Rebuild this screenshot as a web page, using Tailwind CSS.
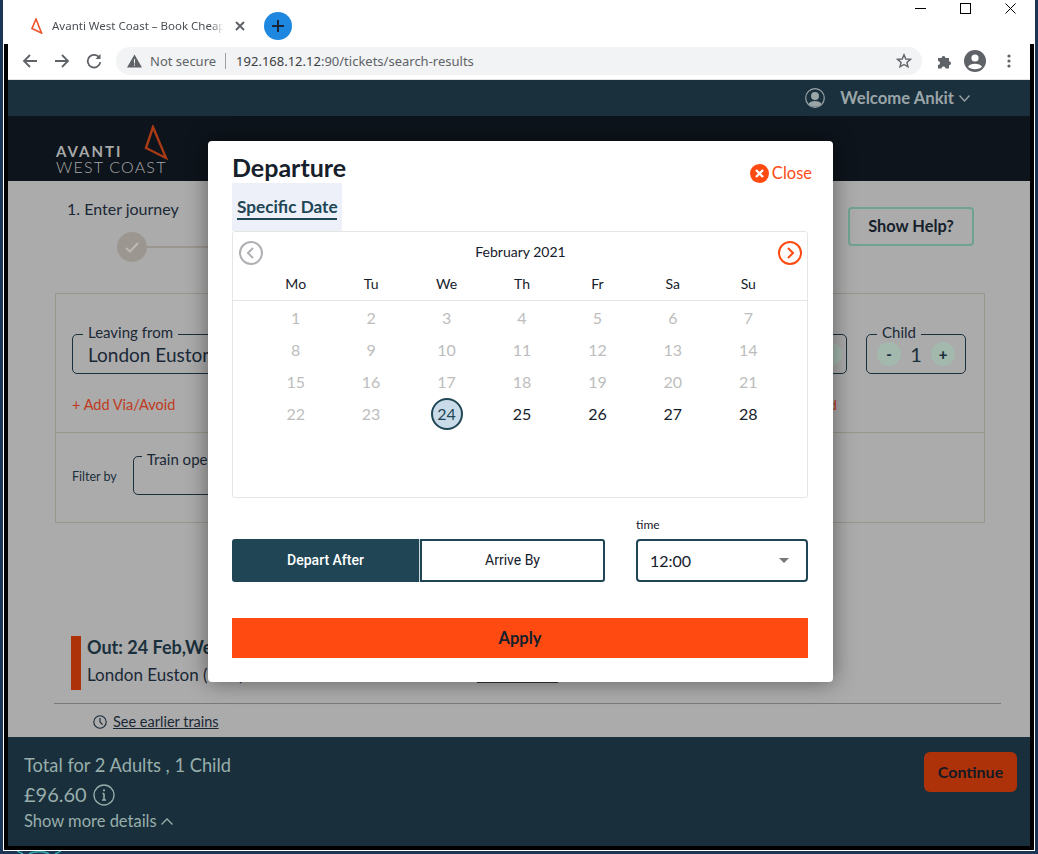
<!DOCTYPE html>
<html lang="en">
<head>
  <meta charset="UTF-8">
  <title>Avanti West Coast – Book Cheap Train Tickets</title>
  <meta name="viewport" content="width=device-width, initial-scale=1.0">
  <script src="https://cdn.jsdelivr.net/npm/@tailwindcss/browser@4"></script>
</head>
<body class="bg-[#1c3557] font-['Lato',sans-serif] overflow-hidden">
  <!-- screen behind the browser window -->
  <div class="w-[1038px] h-[854px] pl-[3px] pr-[3px] overflow-hidden">
    <div class="w-[1032px] h-[851px] bg-white border-r border-l border-b border-white flex flex-col">

      <!-- tab strip -->
      <div class="h-[44px] flex items-center shrink-0 font-['Noto_Sans',sans-serif] mt-[4px] mb-[-4px]">
        <svg class="ml-[27px] w-[12px] h-[16px]" viewBox="0 0 12 16" fill="none" stroke="#f0532a" stroke-width="1.6"><path d="M5 1 L1 10.5 L10.5 15 Z"/></svg>
        <div class="ml-[9px] w-[172px] text-[11.5px] leading-[14px] text-[#4a4f55] whitespace-nowrap overflow-hidden [mask-image:linear-gradient(to_right,black_92%,transparent)]">Avanti West Coast – Book Cheap</div>
        <svg class="ml-[11px] w-[10px] h-[10px]" viewBox="0 0 10 10" stroke="#5f6368" stroke-width="2"><path d="M1 1 L9 9 M9 1 L1 9"/></svg>
        <div class="ml-[19px] w-[28px] h-[28px] rounded-full bg-[#1e88e0] flex items-center justify-center">
          <svg class="w-[14px] h-[14px]" viewBox="0 0 14 14" stroke="#17263a" stroke-width="2"><path d="M7 1 V13 M1 7 H13"/></svg>
        </div>
        <div class="ml-auto flex items-center gap-[34px] pr-[18px] mt-[-36px]">
          <div class="w-[11px] h-px bg-black"></div>
          <div class="w-[11px] h-[11px] border border-black"></div>
          <svg class="w-[11px] h-[11px]" viewBox="0 0 11 11" stroke="black" stroke-width="1"><path d="M0.5 0.5 L10.5 10.5 M10.5 0.5 L0.5 10.5"/></svg>
        </div>
      </div>

      <!-- black window frame with toolbar and page inside -->
      <div class="flex-1 flex flex-col border-l-4 border-r-4 border-b-4 border-black min-h-0">
        <!-- toolbar -->
        <div class="h-[34px] pb-px bg-white flex items-center shrink-0 font-['Noto_Sans',sans-serif] border-b border-[#e3e3e3] box-content">
          <svg class="ml-[14px] w-[16px] h-[16px]" viewBox="0 0 16 16" fill="none" stroke="#5f6368" stroke-width="1.8"><path d="M15 8 H2 M8 2 L2 8 L8 14"/></svg>
          <svg class="ml-[16px] w-[16px] h-[16px]" viewBox="0 0 16 16" fill="none" stroke="#5f6368" stroke-width="1.8"><path d="M1 8 H14 M8 2 L14 8 L8 14"/></svg>
          <svg class="ml-[16px] w-[16px] h-[16px]" viewBox="0 0 16 16" fill="none" stroke="#5f6368" stroke-width="1.8"><path d="M13.5 5 A6.3 6.3 0 1 0 14.3 9"/><path d="M14.5 1 V6 H9.5" fill="#5f6368" stroke="none"/></svg>
          <div class="ml-[14px] w-[806px] h-[28px] rounded-full bg-[#f1f3f4] flex items-center text-[13px] leading-none">
            <svg class="ml-[11px] w-[15px] h-[14px]" viewBox="0 0 15 14"><path d="M7.5 0.5 L15 13.5 H0 Z" fill="#5f6368"/><path d="M7 5 H8 V9.5 H7 Z M7 10.5 H8 V11.8 H7 Z" fill="#f1f3f4"/></svg>
            <span class="ml-[8px] text-[#5f6368]">Not secure</span>
            <span class="ml-[9px] w-px h-[16px] bg-[#9aa0a6]"></span>
            <span class="ml-[10px] text-[#3c4043]">192.168.12.12<span class="text-[#5f6368]">:90/tickets/search-results</span></span>
            <svg class="ml-auto mr-[10px] w-[16px] h-[16px]" viewBox="0 0 16 16" fill="none" stroke="#5f6368" stroke-width="1.4"><path d="M8 1.8 L9.8 6 L14.4 6.4 L10.9 9.4 L12 13.9 L8 11.5 L4 13.9 L5.1 9.4 L1.6 6.4 L6.2 6 Z"/></svg>
          </div>
          <svg class="ml-[15px] w-[15px] h-[15px]" viewBox="0 0 15 15" fill="#5f6368"><path d="M1 4 H4.5 A2 2 0 0 1 8.5 4 H12 V7.2 A2 2 0 0 1 12 11.2 V14.5 H8.5 A2 2 0 0 0 4.5 14.5 H1 V11 A2 2 0 0 0 1 7 Z"/></svg>
          <svg class="ml-[12px] w-[22px] h-[22px]" viewBox="0 0 22 22"><circle cx="11" cy="11" r="11" fill="#5f6368"/><circle cx="11" cy="8" r="3.6" fill="white"/><path d="M4 16.8 C6 12.8 16 12.8 18 16.8 C15.5 20 6.5 20 4 16.8 Z" fill="white"/></svg>
          <svg class="ml-[21px] w-[4px] h-[14px]" viewBox="0 0 4 14" fill="#5f6368"><circle cx="2" cy="2" r="1.6"/><circle cx="2" cy="7" r="1.6"/><circle cx="2" cy="12" r="1.6"/></svg>
        </div>

        <!-- page (dimmed by the modal backdrop) -->
        <div class="relative flex-1 flex flex-col min-h-0 bg-[#ababab] text-[#1a2836]">
          <div class="h-[36px] shrink-0 bg-[#1a303d] flex items-center justify-end pr-[60px] text-[#9aa5a8]">
            <svg class="w-[20px] h-[20px]" viewBox="0 0 20 20" fill="none"><circle cx="10" cy="10" r="9.3" stroke="#9aa5a8" stroke-width="1.2"/><circle cx="10" cy="8" r="4" fill="#9aa5a8"/><path d="M3.5 16 C5 12 15 12 16.5 16 C14 19.5 6 19.5 3.5 16 Z" fill="#9aa5a8"/></svg>
            <span class="ml-[15px] text-[16.7px] font-bold leading-none">Welcome Ankit</span>
            <svg class="ml-[5px] w-[11px] h-[7px]" viewBox="0 0 11 7" fill="none" stroke="#9aa5a8" stroke-width="1.3"><path d="M0.5 0.5 L5.5 6 L10.5 0.5"/></svg>
          </div>
          <div class="h-[65px] shrink-0 bg-[#0d141b] flex items-end pl-[48px] pb-[6px]">
            <div class="relative w-[112px] text-[#a8a8a8]">
              <div class="text-[15px] font-bold tracking-[2px] leading-[15px]">AVANTI</div>
              <div class="text-[16px] font-light tracking-[1.2px] leading-[16px] whitespace-nowrap">WEST COAST</div>
              <svg class="absolute left-[88px] top-[-19px] w-[24px] h-[36px]" viewBox="0 0 24 36" fill="none" stroke="#a83a16" stroke-width="2.4"><path d="M9 2 L2 23 L22 33 Z"/></svg>
            </div>
          </div>

          <!-- journey form -->
          <div class="flex-1 flex flex-col min-h-0 px-[47px] relative">
            <div class="flex justify-between pt-[19px] pl-[12px] pr-[9px] h-[112px]">
              <div>
                <div class="text-[16px] leading-[18px]">1. Enter journey</div>
                <div class="flex items-center mt-[14px] ml-[50px]">
                  <div class="w-[30px] h-[30px] rounded-full bg-[#9c9690] flex items-center justify-center">
                    <svg class="w-[14px] h-[11px]" viewBox="0 0 14 11" fill="none" stroke="#bdb9b5" stroke-width="2"><path d="M1 6 L5 9.5 L13 1"/></svg>
                  </div>
                  <div class="w-[70px] h-[2px] bg-[#9c9690]"></div>
                </div>
              </div>
              <div class="w-[126px] h-[39px] mt-[7px] border-2 border-[#6fa38f] rounded-[4px] flex items-center justify-center text-[16.4px] font-bold text-[#161f2b]">Show Help?</div>
            </div>

            <div class="h-[230px] w-[930px] border border-[#99978c] flex flex-col">
              <div class="h-[139px] border-b border-[#99978c] pt-[40px] pl-[16px] relative">
                <div class="flex">
                  <div class="relative w-[300px] h-[40px] border border-[#1a303d] rounded-[5px] pl-[15px] text-[19px] leading-[40px]">
                    <span class="absolute left-[10px] top-[-12px] bg-[#ababab] px-[5px] text-[15px] leading-[18px]">Leaving from</span>
                    London Euston
                  </div>
                </div>
                <div class="mt-[22px] text-[14.5px] leading-[18px] text-[#c0391b]">+ Add Via/Avoid</div>
                <div class="absolute left-[773px] top-[102px] text-[14px] leading-[18px] text-[#c0391b]">d</div>
                <!-- adults field, mostly hidden by the modal -->
                <div class="absolute left-[600px] top-[40px] w-[191px] h-[40px] border border-[#1a303d] rounded-[5px]">
                  <div class="absolute right-[4px] top-[7px] w-[24px] h-[24px] rounded-full bg-[#a4b9ae]"></div>
                </div>
                <div class="absolute left-[810px] top-[40px] w-[100px] h-[40px] border border-[#1a303d] rounded-[5px] flex items-center justify-between px-[10px]">
                  <span class="absolute left-[10px] top-[-12px] bg-[#ababab] px-[5px] text-[15px] leading-[18px]">Child</span>
                  <span class="w-[24px] h-[24px] rounded-full bg-[#a4b9ae] flex items-center justify-center text-[15px] font-black text-[#1a303d]">-</span>
                  <span class="text-[20px] text-[#1a303d]">1</span>
                  <span class="w-[24px] h-[24px] rounded-full bg-[#a4b9ae] flex items-center justify-center text-[15px] font-black text-[#1a303d]">+</span>
                </div>
              </div>
              <div class="flex-1 flex items-center pl-[16px] relative">
                <span class="text-[12.5px] text-[#1a303d]">Filter by</span>
                <div class="relative ml-[16px] mt-[-5px] w-[200px] h-[39px] border border-[#1a303d] rounded-[5px]">
                  <span class="absolute left-[8px] top-[-7px] bg-[#ababab] px-[5px] text-[15px] leading-[18px] whitespace-nowrap">Train operators</span>
                </div>
              </div>
            </div>

            <div class="relative flex mt-[113px] ml-[16px] h-[54px]">
              <div class="w-[10px] h-[54px] bg-[#ae3209]"></div>
              <div class="ml-[6px]">
                <div class="text-[18px] font-bold leading-[22px] text-[#1a303d]">Out: 24 Feb,Wed</div>
                <div class="text-[17px] leading-[20px] mt-[7px] whitespace-nowrap">London Euston (EUS)</div>
              </div>
              <!-- tail of the route link, showing under the modal edge -->
              <div class="absolute left-[406px] top-[46px] w-[81px] h-px bg-[#333]"></div>
            </div>
            <div class="mt-[13px] ml-[-1px] w-[947px] h-px bg-[#77797b]"></div>
            <div class="flex items-center mt-[10px] ml-[38px] text-[14.5px] leading-[16px]">
              <svg class="w-[14px] h-[14px]" viewBox="0 0 14 14" fill="none" stroke="#1a2836" stroke-width="1.1"><circle cx="7" cy="7" r="6.2"/><path d="M7 3 V7 L9.6 9.6"/></svg>
              <span class="ml-[6px] underline">See earlier trains</span>
            </div>
          </div>

          <!-- total bar -->
          <div class="h-[109px] shrink-0 bg-[#192f3c] flex justify-between pl-[16px] pr-[13px] text-[#98aeab] absolute bottom-0 left-0 right-0">
            <div class="pt-[17px]">
              <div class="text-[18.3px] leading-[22px]">Total for 2 Adults , 1 Child</div>
              <div class="flex items-center mt-[6px]">
                <span class="text-[20px] leading-[24px]">£96.60</span>
                <svg class="ml-[6px] mt-[2px] w-[22px] h-[22px]" viewBox="0 0 22 22" fill="none" stroke="#98aeab"><circle cx="11" cy="11" r="10" stroke-width="1.3"/><path d="M11 9.5 V16 M9 16 H13 M9.5 9.5 H11" stroke-width="1.6"/><circle cx="11" cy="6.3" r="1.1" fill="#98aeab" stroke="none"/></svg>
              </div>
              <div class="flex items-center mt-[5px]">
                <span class="text-[16.5px] leading-[20px]">Show more details</span>
                <svg class="ml-[4px] w-[12px] h-[7px]" viewBox="0 0 12 7" fill="none" stroke="#98aeab" stroke-width="1.3"><path d="M0.5 6.5 L6 1 L11.5 6.5"/></svg>
              </div>
            </div>
            <div class="mt-[15px] w-[93px] h-[40px] rounded-[6px] bg-[#ae3209] flex items-center justify-center text-[16px] font-bold text-[#141a24]">Continue</div>
          </div>

          <!-- departure modal -->
          <div class="absolute left-[200px] top-[61px] w-[625px] h-[541px] bg-white rounded-[4px] shadow-[0_0_22px_rgba(0,0,0,0.45)] px-[24px] pt-[11px]">
            <div class="flex justify-between h-[31px]">
              <div class="text-[25px] font-bold leading-[30px] text-[#15202b]">Departure</div>
              <div class="flex items-center mt-[9px] h-[24px] text-[16.5px] text-[#ff4a12]">
                <svg class="w-[19px] h-[19px]" viewBox="0 0 19 19"><circle cx="9.5" cy="9.5" r="9.5" fill="#ff4a12"/><path d="M6 6 L13 13 M13 6 L6 13" stroke="white" stroke-width="2.4"/></svg>
                <span class="ml-[3px] mr-[-3px]">Close</span>
              </div>
            </div>
            <div class="w-[110px] h-[48px] bg-[#edf0f8] pt-[14px] pl-[5px]">
              <div class="w-[100px] text-[17.2px] font-bold leading-[19px] text-[#204656] border-b-2 border-[#204656] pb-[2px] whitespace-nowrap">Specific Date</div>
            </div>

            <!-- calendar -->
            <div class="w-[576px] h-[267px] border border-[#e5e5e5] rounded-[3px] relative">
              <div class="flex items-center justify-between h-[39px] pl-[6px] pr-[5px] text-[14px] text-[#15202b]">
                <svg class="mt-[3px] w-[24px] h-[24px]" viewBox="0 0 24 24" fill="none" stroke="#aeb0b3" stroke-width="2"><circle cx="12" cy="12" r="11"/><path d="M14 7 L9 12 L14 17"/></svg>
                <span>February 2021</span>
                <svg class="mt-[3px] w-[24px] h-[24px]" viewBox="0 0 24 24" fill="none" stroke="#ff4a12" stroke-width="2"><circle cx="12" cy="12" r="11"/><path d="M10 7 L15 12 L10 17"/></svg>
              </div>
              <div class="grid grid-cols-7 pl-[25px] pr-[21px] h-[29px] items-start leading-[25px] text-center text-[14px] text-[#15202b]">
                <span>Mo</span><span>Tu</span><span>We</span><span>Th</span><span>Fr</span><span>Sa</span><span>Su</span>
              </div>
              <div class="border-t border-[#e5e5e5] grid grid-cols-7 auto-rows-[32px] items-center justify-items-center pl-[25px] pr-[21px] pt-[1px] text-[16px] text-[#bdbdbd]">
                <span>1</span><span>2</span><span>3</span><span>4</span><span>5</span><span>6</span><span>7</span>
                <span>8</span><span>9</span><span>10</span><span>11</span><span>12</span><span>13</span><span>14</span>
                <span>15</span><span>16</span><span>17</span><span>18</span><span>19</span><span>20</span><span>21</span>
                <span>22</span><span>23</span>
                <span class="w-[32px] h-[32px] rounded-full bg-[#c9dbe9] border-2 border-[#204656] flex items-center justify-center text-[#204656]">24</span>
                <span class="text-[#15202b]">25</span><span class="text-[#15202b]">26</span><span class="text-[#15202b]">27</span><span class="text-[#15202b]">28</span>
              </div>
            </div>

            <!-- depart / arrive and time -->
            <div class="flex mt-[20px] h-[64px] items-end">
              <div class="flex w-[373px] h-[43px] text-[14px] font-['Roboto',sans-serif]">
                <div class="w-[188px] bg-[#204656] border-r border-[#c9d6dc] text-white font-medium flex items-center justify-center rounded-l-[3px]">Depart After</div>
                <div class="flex-1 border-2 border-[#204656] text-[#15202b] flex items-center justify-center rounded-r-[3px]">Arrive By</div>
              </div>
              <div class="ml-[31px] w-[172px]">
                <div class="text-[12px] leading-[14px] mb-[7px] text-[#15202b]">time</div>
                <div class="h-[43px] border-2 border-[#204656] rounded-[4px] flex items-center justify-between pl-[12px] pr-[17px] text-[16px] text-[#15202b]">
                  12:00
                  <span class="w-0 h-0 border-l-[5px] border-r-[5px] border-t-[5px] border-l-transparent border-r-transparent border-t-[#777]"></span>
                </div>
              </div>
            </div>

            <div class="mt-[36px] w-[576px] h-[40px] bg-[#ff4a12] flex items-center justify-center text-[16.5px] font-bold text-[#15202b]">Apply</div>
          </div>
        </div>
      </div>
    </div>
    <!-- wallpaper graphic peeking out below the window -->
    <svg class="ml-[14px] w-[44px] h-[3px]" viewBox="0 0 44 3" fill="none" stroke="#3aa8a8" stroke-width="1.5"><path d="M0 0 L6 3 M12 3 C16 0 28 0 32 3 M38 3 L44 0"/></svg>
  </div>
</body>
</html>
